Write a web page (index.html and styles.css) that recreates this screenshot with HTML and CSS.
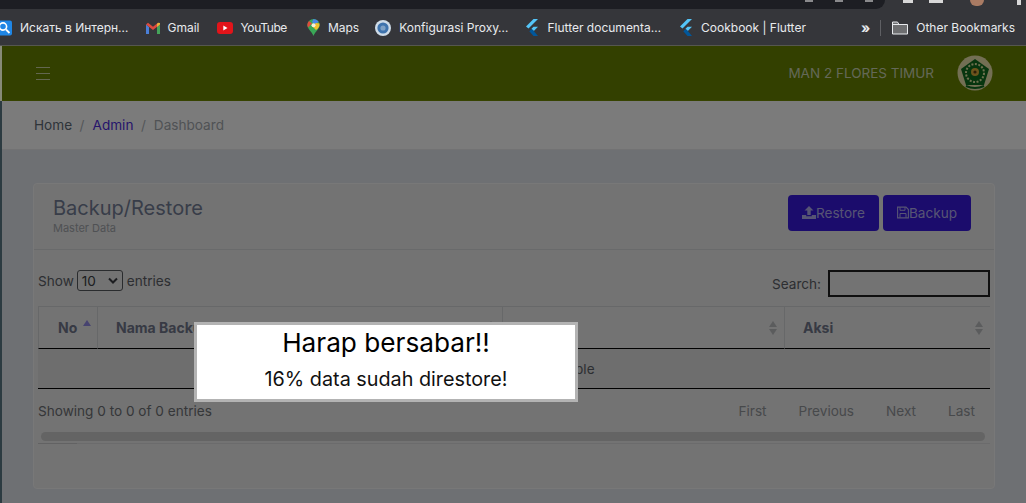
FILE: index.html
```html
<!DOCTYPE html>
<html lang="id">
<head>
<meta charset="utf-8">
<title>Backup/Restore</title>
<link rel="stylesheet" href="styles.css">
</head>
<body>
<div class="tabstrip">
  <div class="tab-dark">
    <span class="speck s1"></span><span class="speck s2"></span><span class="speck s3"></span>
  </div>
  <div class="tab-tools">
    <span class="tool t1"></span><span class="tool t2"></span><span class="tool t3"></span><span class="tool t4"></span>
  </div>
</div>
<nav class="bookmarks">
  <a class="bm bm-first"><svg class="fav" width="14" height="16" viewBox="0 0 14 16"><rect x="0" y="0.5" width="14" height="15" rx="2" fill="#1f86e5"/><circle cx="5" cy="6.5" r="3.6" fill="none" stroke="#fff" stroke-width="1.6"/><path d="M8 9.5l3.5 3.5" stroke="#fff" stroke-width="1.8"/></svg><span>Искать в Интерн…</span></a>
  <a class="bm"><svg class="fav" width="14" height="12" viewBox="0 0 14 12"><path d="M0 2.5V12h3V5z" fill="#4a7fd8"/><path d="M11 5v7h3V2.5z" fill="#45a45a"/><path d="M0 2.5L2 .8 7 4.8 12 .8l2 1.7L7 8z" fill="#dc4a3e"/><path d="M11 5l3-2.5V1l-2-.2L11 2z" fill="#e8b33a"/></svg><span>Gmail</span></a>
  <a class="bm bm-yt"><svg class="fav" width="16" height="12" viewBox="0 0 16 12"><rect width="16" height="12" rx="3" fill="#e2141a"/><path d="M6.3 3.6v4.8L10.5 6z" fill="#fff"/></svg><span>YouTube</span></a>
  <a class="bm bm-maps"><svg class="fav" width="13" height="17" viewBox="0 0 13 17"><path d="M6.5 0A6.2 6.2 0 0 0 .4 6.2C.4 10 4.6 12.2 6.5 17 8.4 12.2 12.6 10 12.6 6.2A6.2 6.2 0 0 0 6.5 0z" fill="#3aa757"/><path d="M6.5 0a6.2 6.2 0 0 1 5 2.6L8.5 6 5 3z" fill="#4a86e8"/><path d="M2 2l3 2.500L1 8.500a6 6 0 0 1 1-6.500z" fill="#e24a3b"/><path d="M12.500 4.500A7 7 0 0 1 9 11L5 7l4-3z" fill="#f3bf2f"/><circle cx="6.500" cy="6.200" r="2" fill="#f7f1d8"/></svg><span>Maps</span></a>
  <a class="bm bm-proxy"><svg class="fav" width="16" height="16" viewBox="0 0 16 16"><circle cx="8" cy="8" r="8" fill="#cfdce8"/><circle cx="8" cy="8" r="5.600" fill="#3e73ad"/><circle cx="8" cy="8" r="2.600" fill="#7fa2c6"/></svg><span>Konfigurasi Proxy…</span></a>
  <a class="bm"><svg class="fav" width="14" height="17" viewBox="0 0 14 17"><path d="M8.500 0H13L3.500 9.500 1 7.500z" fill="#54c5f8"/><path d="M8.500 7.800H13L8.800 12 6.500 9.800z" fill="#54c5f8"/><path d="M6.500 10l2.300 2L13 17H8.500L4.300 12.200z" fill="#01579b"/></svg><span>Flutter documenta…</span></a>
  <a class="bm bm-cook"><svg class="fav" width="14" height="17" viewBox="0 0 14 17"><path d="M8.500 0H13L3.500 9.500 1 7.500z" fill="#54c5f8"/><path d="M8.500 7.800H13L8.800 12 6.500 9.800z" fill="#54c5f8"/><path d="M6.500 10l2.300 2L13 17H8.500L4.300 12.200z" fill="#01579b"/></svg><span>Cookbook | Flutter</span></a>
  <span class="bm-more">»</span>
  <span class="bm-sep"></span>
  <a class="bm bm-other"><svg class="fav" width="16" height="14" viewBox="0 0 16 14"><path d="M.5 13V1h5l1.500 2.500h8.500V13z" fill="#6d6e70" stroke="#e8eaed"/><path d="M.5 3.500H7" stroke="#e8eaed"/></svg><span>Other Bookmarks</span></a>
</nav>
<div class="app">
  <aside class="sidebar"><div class="sidebar-top"></div></aside>
  <div class="main">
    <header class="topbar">
      <div class="burger"><span></span><span></span><span></span></div>
      <div class="school">MAN 2 FLORES TIMUR</div>
      <svg class="logo" width="36" height="36" viewBox="0 0 36 36">
        <circle cx="18" cy="18" r="17.500" fill="#e6dfa8"/>
        <path d="M18 4l14 10-5 16H9L4 14z" fill="#0f6b1e"/>
        <circle cx="18" cy="18" r="9" fill="none" stroke="#dfe3a0" stroke-width="2" stroke-dasharray="2 1.500"/>
        <circle cx="18" cy="17" r="4" fill="#d8a93a"/>
        <circle cx="18" cy="17" r="1.600" fill="#5a3d10"/>
        <path d="M9 31q9 4 18 0" stroke="#0f6b1e" stroke-width="2" fill="none"/>
      </svg>
    </header>
    <div class="crumbs">
      <span class="crumb">Home</span><span class="slash">/</span><span class="crumb crumb-link">Admin</span><span class="slash">/</span><span class="crumb crumb-now">Dashboard</span>
    </div>
    <section class="content">
      <div class="card">
        <div class="card-head">
          <div class="card-titles">
            <h1 class="card-title">Backup/Restore</h1>
            <div class="card-sub">Master Data</div>
          </div>
          <div class="actions">
            <button class="btn btn-restore"><svg width="14" height="13" viewBox="0 0 14 13"><path d="M7 0l4.500 4.500H8.700V9H5.300V4.500H2.500z" fill="currentColor"/><path d="M0 9h4.200v1.200h5.600V9H14v4H0z" fill="currentColor"/></svg>Restore</button>
            <button class="btn btn-backup"><svg width="12" height="13" viewBox="0 0 12 13"><path d="M.6 1.100h8.400l2.400 2.400v8.400H.6z" fill="none" stroke="currentColor" stroke-width="1.100"/><path d="M3 1.300v3h5v-3M3 11.700V7.500h6v4.200" fill="none" stroke="currentColor"/></svg>Backup</button>
          </div>
        </div>
        <div class="dt">
          <div class="dt-tools">
            <label class="dt-len">Show <span class="fake-select"><span>10</span><svg width="10" height="7" viewBox="0 0 10 7"><path d="M1 1.500l4 4 4-4" fill="none" stroke="currentColor" stroke-width="2"/></svg></span> <span class="dt-len-tail">entries</span></label>
            <label class="dt-search">Search: <span class="fake-input"></span></label>
          </div>
          <table class="grid">
            <thead>
              <tr>
                <th class="c-no sorted">No<i class="sort sort-up"></i></th>
                <th class="c-name">Nama Backup<i class="sort"></i></th>
                <th class="c-date">Tanggal<i class="sort"></i></th>
                <th class="c-act">Aksi<i class="sort"></i></th>
              </tr>
            </thead>
            <tbody>
              <tr><td colspan="4">No data available in table</td></tr>
            </tbody>
          </table>
          <div class="dt-foot">
            <div class="dt-info">Showing 0 to 0 of 0 entries</div>
            <div class="pager"><a>First</a><a>Previous</a><a>Next</a><a>Last</a></div>
          </div>
          <div class="hscroll"><div class="thumb"></div></div>
          <div class="tail"><span class="tail-mark"></span></div>
        </div>
      </div>
    </section>
    <div class="overlay"></div>
    <div class="dialog">
      <div class="dialog-title">Harap bersabar!!</div>
      <div class="dialog-text">16% data sudah direstore!</div>
    </div>
  </div>
</div>
</body>
</html>
```
FILE: styles.css
```css
* { box-sizing: border-box; }
html, body { margin: 0; height: 100%; }
body {
  width: 1026px;
  height: 503px;
  overflow: hidden;
  font-family: Inter, "Liberation Sans", sans-serif;
  background: #dde0e6;
  display: flex;
  flex-direction: column;
}

/* browser chrome */
.tabstrip { height: 9px; display: flex; background: #35363a; flex: none; overflow: hidden; }
.tab-dark { width: 885px; background: #1d1e23; border-bottom-right-radius: 9px; display: flex; justify-content: flex-end; gap: 22px; padding-right: 12px; }
.speck { display: block; width: 8px; height: 2px; background: #8a8a8c; }
.tab-tools { flex: 1; display: flex; align-items: flex-start; gap: 16px; padding-left: 18px; }
.tool { display: block; height: 3px; background: #d8d8d8; }
.t1 { width: 10px; }
.t2 { width: 14px; }
.t3 { width: 14px; height: 6px; margin: 0 17px 0 11px; background: #a97b63; border-radius: 0 0 7px 7px; }
.t4 { width: 4px; height: 5px; }

.bookmarks {
  height: 37px;
  flex: none;
  display: flex;
  align-items: center;
  gap: 17px;
  background: #35363a;
  border-bottom: 1px solid #55574f;
  padding-top: 1px;
  font-size: 12px;
  color: #e8eaed;
  white-space: nowrap;
}
.bm { display: flex; align-items: center; gap: 8px; }
.bm-first { margin-left: -2px; }
.bm-yt span { letter-spacing: -.4px; }
.bm-maps { margin-left: 3px; }
.bm-proxy { margin-left: -1px; }
.bm-cook { margin-left: 1px; }
.fav { display: block; flex: none; }
.bm-more { margin-left: auto; font-size: 14px; font-weight: 700; }
.bm-sep { width: 1px; height: 16px; background: #5f6064; margin: 0 -6px 0 -7px; }
.bm-other { margin-right: 11px; }

/* page */
.app { flex: 1; display: flex; min-height: 0; }
.sidebar { width: 2px; flex: none; background: #2c3b41; }
.sidebar-top { height: 55px; background: #878a78; }
.main { flex: 1; position: relative; min-width: 0; display: flex; flex-direction: column; }

.topbar {
  height: 55px;
  flex: none;
  display: flex;
  align-items: center;
  background: #668000;
  padding: 0 33px 0 34px;
  border-bottom: 1px solid #6f8600;
}
.burger { width: 14px; display: flex; flex-direction: column; gap: 5px; }
.burger span { display: block; height: 1px; background: #c6cfa0; }
.school { margin-left: auto; font-size: 13.5px; color: #c8d0b0; }
.logo { margin-left: 23px; display: block; }

.crumbs {
  height: 49px;
  flex: none;
  display: flex;
  align-items: center;
  padding: 0 0 0 32px;
  background: #f7f7f7;
  border-bottom: 1px solid #e4e5e6;
  font-size: 13.6px;
}
.crumb { color: #5c6873; }
.crumb-link { color: #4c2ad8; }
.crumb-now { color: #a0a5aa; }
.slash { color: #a8adb2; margin: 0 8px 0 7.5px; }

.content { flex: 1; padding: 33px 31px 14px; }
.card {
  height: 306px;
  background: #e6e6e6;
  border: 1px solid #f0f0f0;
  border-radius: 4px;
}
.card-head {
  height: 66px;
  display: flex;
  align-items: flex-start;
  justify-content: space-between;
  padding: 11px 23px 0 19px;
  border-bottom: 1px solid #d2d4d6;
}
.card-title { margin: 0; font-size: 20px; font-weight: 400; line-height: 26px; color: #707a92; }
.card-sub { font-size: 11px; line-height: 12px; color: #9ea3a8; margin-top: 1px; }
.actions { display: flex; gap: 4px; }
.btn {
  height: 36px;
  display: flex;
  align-items: center;
  padding: 0 14px 1px 14px;
  border: none;
  border-radius: 4px;
  background: #3719d8;
  color: #aeaae8;
  font: 13.6px Inter, "Liberation Sans", sans-serif;
}
.btn svg { display: block; }

.dt { padding: 0 4px; }
.dt-tools {
  height: 56px;
  display: flex;
  justify-content: space-between;
  align-items: flex-start;
  font-size: 13.6px;
  color: #5a5d64;
}
.dt-len { display: flex; align-items: center; gap: 3px; padding-top: 20px; }
.dt-len-tail { margin-left: 1px; }
.fake-select {
  width: 46px;
  height: 21px;
  display: flex;
  align-items: center;
  justify-content: space-between;
  padding: 0 4px;
  border: 1px solid #55585c;
  border-radius: 3px;
  color: #3b3d42;
}
.dt-search { display: flex; align-items: flex-start; gap: 7px; padding-top: 20px; line-height: 29px; }
.fake-input { width: 162px; height: 27px; border: 2px solid #1e1e1e; }

.grid { width: 952px; border-collapse: separate; border-spacing: 0; table-layout: fixed; font-size: 13.6px; }
.grid th {
  position: relative;
  height: 43px;
  padding: 0 0 0 18px;
  text-align: left;
  font-size: 14px;
  font-weight: 700;
  color: #6e7488;
  border-top: 1px solid #cfd1d3;
  border-left: 1px solid #cfd1d3;
  border-bottom: 1px solid #000;
}
.grid .c-no { width: 59px; padding-left: 19px; }
.c-name { width: 405px; }
.c-date { width: 282px; }
.grid .c-act { width: 206px; }
.sort { position: absolute; right: 7px; top: 14px; width: 8px; height: 14px; }
.sort::before, .sort::after {
  content: "";
  position: absolute;
  left: 0;
  border-left: 4px solid transparent;
  border-right: 4px solid transparent;
}
.sort::before { top: 0; border-bottom: 6px solid #b6b8bb; }
.sort::after { bottom: 0; border-top: 6px solid #b6b8bb; }
.sort-up { right: 6px; top: 13px; }
.sort-up::before { border-bottom-color: #8f86e0; }
.sort-up::after { display: none; }
.grid td {
  height: 40px;
  text-align: center;
  color: #5a5d64;
  background: #dcdcdc;
  border-bottom: 1px solid #000;
}
.dt-foot {
  height: 39px;
  display: flex;
  align-items: center;
  justify-content: space-between;
  padding-top: 4px;
  font-size: 13.6px;
  color: #6b6e72;
}
.pager { display: flex; gap: 32px; padding-right: 15px; color: #8f9296; }
.hscroll { height: 16px; padding: 4px 5px 0 3px; border-bottom: 1px solid #d6d7d8; }
.thumb { height: 9px; border-radius: 5px; background: #c8c8c8; }
.tail-mark { display: block; width: 39px; height: 1px; background: #c4c5c6; margin-top: -1px; }

/* blocking alert */
.overlay { position: absolute; inset: 0; background: rgba(0, 0, 0, .5); }
.dialog {
  position: absolute;
  left: 192px;
  top: 276px;
  width: 384px;
  height: 80px;
  background: #fff;
  border: 3px solid #b3b3b3;
  text-align: center;
  color: #000;
}
.dialog-title { font-size: 26.2px; line-height: 33px; margin-top: 1px; }
.dialog-text { font-size: 19.8px; line-height: 26px; margin-top: 7px; color: #111; }
```
